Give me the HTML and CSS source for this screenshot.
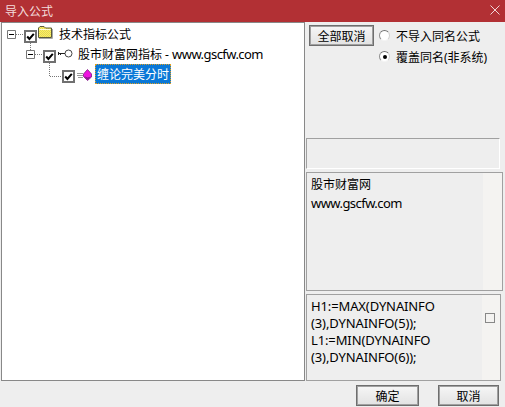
FILE: index.html
```html
<!DOCTYPE html>
<html lang="zh">
<head>
<meta charset="utf-8">
<title>导入公式</title>
<link rel="stylesheet" href="styles.css">
</head>
<body>
<div class="window">
  <header class="titlebar">
    <span class="title">导入公式</span>
    <svg class="close" width="10" height="10" viewBox="0 0 10 10"><path d="M0.500 0.500L9.500 9.500M9.500 0.500L0.500 9.500" stroke="#f0d6d6" stroke-width="1" fill="none"/></svg>
  </header>
  <main class="main">
    <section class="tree">
      <div class="row row-1">
        <svg class="expander" width="9" height="9" viewBox="0 0 9 9"><path d="M0.500 0.500H8.500V8.500H0.500Z" fill="#fff" stroke="#777"/><path d="M2 4.500H7" stroke="#000"/></svg>
        <svg class="dots" width="8" height="1" viewBox="0 0 8 1"><path d="M0 .5H8" stroke="#777" stroke-dasharray="1 1"/></svg>
        <svg class="check" width="13" height="13" viewBox="0 0 13 13"><path d="M1 1H12V12H1Z" fill="#fff" stroke="#707070" stroke-width="2"/><path d="M3.200 6.500L5.400 9L9.800 3.800" fill="none" stroke="#000" stroke-width="2"/></svg>
        <svg class="folder" width="15" height="13" viewBox="0 0 15 13">
          <defs><pattern id="dither" width="2" height="2" patternUnits="userSpaceOnUse"><rect width="2" height="2" fill="#fff65a"/><rect width="1" height="1" fill="#e0d060"/><rect x="1" y="1" width="1" height="1" fill="#e0d060"/></pattern></defs>
          <path d="M0.500 11.500V2L2 .5H6L7.500 2H13.500V11.500Z" fill="url(#dither)" stroke="#5a5a3a"/><path d="M1.500 3.500H12.500" stroke="#fffde0"/><path d="M1 12.500H14.500V3" fill="none" stroke="#a8a8a8"/>
        </svg>
        <span class="label">技术指标公式</span>
      </div>
      <div class="row row-2">
        <svg class="expander" width="9" height="9" viewBox="0 0 9 9"><path d="M0.500 0.500H8.500V8.500H0.500Z" fill="#fff" stroke="#777"/><path d="M2 4.500H7" stroke="#000"/></svg>
        <svg class="dots" width="8" height="1" viewBox="0 0 8 1"><path d="M0 .5H8" stroke="#777" stroke-dasharray="1 1"/></svg>
        <svg class="check" width="13" height="13" viewBox="0 0 13 13"><path d="M1 1H12V12H1Z" fill="#fff" stroke="#707070" stroke-width="2"/><path d="M3.200 6.500L5.400 9L9.800 3.800" fill="none" stroke="#000" stroke-width="2"/></svg>
        <svg class="key" width="15" height="9" viewBox="0 0 15 9"><circle cx="10.500" cy="4.500" r="3.500" fill="#fff" stroke="#444"/><path d="M0.500 3V6M2.500 4V6M0 4.500H7" stroke="#222" fill="none"/></svg>
        <span class="label">股市财富网指标 - <span class="url">www.gscfw.com</span></span>
      </div>
      <div class="row row-3">
        <svg class="check" width="13" height="13" viewBox="0 0 13 13"><path d="M1 1H12V12H1Z" fill="#fff" stroke="#707070" stroke-width="2"/><path d="M3.200 6.500L5.400 9L9.800 3.800" fill="none" stroke="#000" stroke-width="2"/></svg>
        <svg class="gem" width="15" height="12" viewBox="0 0 15 12"><path d="M0 4.500H6M0 6.500H6M1 8.500H6" stroke="#999"/><path d="M10.500 0.500L14.500 5V8L10.500 11.500L6.500 7.500V5Z" fill="#f012e0" stroke="#7a1a80" stroke-width=".8"/><path d="M7 7L10.500 11L14 7.500L10.500 8.500Z" fill="#8a1890"/></svg>
        <span class="selected">缠论完美分时</span>
      </div>
      <svg class="connectors" width="80" height="60" viewBox="0 0 80 60">
        <path d="M28.500 20V27M47.500 40V53.500H60" fill="none" stroke="#777" stroke-dasharray="1 1"/>
      </svg>
    </section>
    <aside class="side">
      <div class="options">
        <button class="btn btn-all">全部取消</button>
        <div class="radios">
          <label class="radio"><span class="dot"></span>不导入同名公式</label>
          <label class="radio"><span class="dot on"></span>覆盖同名(非系统)</label>
        </div>
      </div>
      <div class="panel panel-empty"></div>
      <div class="panel panel-desc">
        <p>股市财富网</p>
        <p class="url">www.gscfw.com</p>
      </div>
      <div class="panel panel-code">
        <p class="latin">H1:=MAX(DYNAINFO<br>(3),DYNAINFO(5));<br>L1:=MIN(DYNAINFO<br>(3),DYNAINFO(6));</p>
        <span class="scroll-box"></span>
      </div>
    </aside>
  </main>
  <footer class="footer">
    <button class="btn btn-ok">确定</button>
    <button class="btn btn-cancel">取消</button>
  </footer>
</div>
</body>
</html>
```
FILE: styles.css
```css
* { box-sizing: border-box; }
html, body { margin: 0; padding: 0; }
body {
  width: 505px;
  height: 407px;
  overflow: hidden;
  font-family: "Noto Sans", "Noto Sans CJK SC", sans-serif;
  font-size: 12px;
  color: #000;
  background: #eeeeee;
}
.window { width: 505px; height: 407px; display: flex; flex-direction: column; }
.titlebar {
  height: 22px;
  flex: none;
  background: #b23034;
  color: #f3dcdc;
  display: flex;
  align-items: center;
  justify-content: space-between;
  padding: 0 5px;
}
.title { font-size: 12px; }
.close { margin-top: -2px; }
.main { height: 359px; flex: none; display: flex; }
.tree {
  position: relative;
  width: 304px;
  height: 359px;
  margin-left: 1px;
  flex: none;
  background: #fff;
  border: 1px solid #888;
}
.connectors { position: absolute; left: 0; top: 0; pointer-events: none; }
.row { display: flex; align-items: center; height: 20px; white-space: nowrap; }
.row-1 { margin-top: 1px; padding-left: 5px; }
.row-2 { padding-left: 24px; }
.row-3 { padding-left: 60px; }
.check { flex: none; margin-top: 5px; }
.folder { margin: -4px 0 0 1px; }
.row-1 .label { margin-left: 6px; }
.key { margin-left: 2px; margin-top: -2px; }
.row-2 .label { margin-left: 5px; }
.gem { margin-left: 2px; margin-top: 1px; }
.label { font-size: 12px; }
.latin { font-size: 13px; letter-spacing: -0.12px; }
.url { font-size: 13px; letter-spacing: -0.55px; }
.selected {
  margin-left: 3px;
  width: 76px;
  height: 20px;
  line-height: 20px;
  background: #0a78d7;
  color: #fff;
  padding-left: 1px;
  border: 1px dotted #e0a020;
}
.side { flex: none; width: 199px; margin-left: 1px; display: flex; flex-direction: column; }
.options { height: 116px; display: flex; align-items: flex-start; padding: 3px 0 0 3px; gap: 5px; }
.btn {
  font: inherit;
  font-size: 12px;
  color: #000;
  background: linear-gradient(#f6f6f6, #e2e2e2);
  border: 1px solid #6e6e6e;
  padding: 0;
  outline: 1px solid #a0a0a0;
  outline-offset: -2px;
}
.btn-all { width: 65px; height: 21px; flex: none; }
.btn-ok { width: 63px; height: 21px; }
.btn-cancel { width: 61px; height: 21px; }
.radios { display: flex; flex-direction: column; }
.radio { display: flex; align-items: center; gap: 6px; height: 21px; }
.dot {
  width: 11px; height: 11px; border-radius: 50%;
  background: #fff;
  border: 1px solid;
  border-color: #707070 #d0d0d0 #f4f4f4 #909090;
  display: flex; align-items: center; justify-content: center;
}
.dot.on::after { content: ""; width: 4px; height: 4px; border-radius: 50%; background: #000; }
.panel { border: 1px solid #a0a0a0; flex: none; }
.panel p { margin: 0; }
.panel-empty { width: 194px; height: 31px; background: #eee; border-right-color: #fff; border-bottom-color: #fff; }
.panel-desc { width: 197px; height: 119px; margin-top: 3px; padding: 3px 4px; line-height: 18px; background: linear-gradient(90deg, #eee 176px, #f4f3f1 176px); }
.panel-code { width: 195px; height: 87px; margin-top: 3px; padding: 3px 4px; line-height: 17px; display: flex; justify-content: space-between; align-items: flex-start; background: linear-gradient(90deg, #eee 175px, #f4f3f1 175px); }
.scroll-box { width: 10px; height: 10px; background: #f4f3f1; border: 1px solid #888; margin: 15px 1px 0 0; flex: none; }
.footer { flex: 1; display: flex; justify-content: flex-end; align-items: flex-start; gap: 19px; padding: 4px 6px 0 0; }
```
